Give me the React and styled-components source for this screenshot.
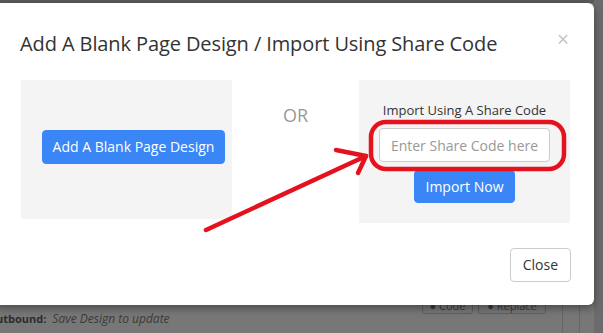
import React from 'react'
import styled, {createGlobalStyle} from 'styled-components'

const Global = createGlobalStyle`
  html, body { margin: 0; padding: 0; }
  body {
    width: 603px;
    height: 333px;
    overflow: hidden;
    font-family: "Open Sans", "Noto Sans", sans-serif;
    background: #767676;
  }
`

const Page = styled.div`
  position: relative;
  width: 603px;
  height: 333px;
  background: #777;
  overflow: hidden;
`

const TopStrip = styled.div`
  height: 3px;
  background: #5a5a5a;
`

const BackRow = styled.div`
  display: flex;
  align-items: center;
  gap: 6px;
  padding: 307px 0 0 0;
  font-size: 11px;
  color: #2c2c2c;
`

const BackLabel = styled.span`
  font-weight: 700;
  margin-left: -4px;
`

const BackHint = styled.span`
  font-style: italic;
  font-size: 12px;
  color: #3a3a3a;
`

const Ghost = styled.span`
  display: inline-flex;
  align-items: flex-end;
  justify-content: center;
  box-sizing: border-box;
  height: 18px;
  width: ${p => p.w}px;
  border: 1px solid #5f5f5f;
  border-radius: 3px;
  font-size: 11px;
  line-height: 11px;
  color: #3a3a3a;
  padding-bottom: 2px;
`

const GhostGroup = styled.div`
  display: flex;
  gap: 5px;
  margin-left: auto;
  margin-right: 57px;
  margin-top: -27px;
`

const Rule = styled.div`
  position: absolute;
  top: 300px;
  left: ${p => p.x}px;
  width: 1px;
  height: 40px;
  background: #666;
`

const RightStrip = styled.div`
  position: absolute;
  top: 0;
  right: 0;
  width: 9px;
  height: 333px;
  background: #6b6b6b;
`

const Modal = styled.div`
  position: absolute;
  top: 3px;
  left: -6px;
  width: 600px;
  height: 302px;
  background: #fff;
  border-radius: 6px;
  box-shadow: 0 3px 9px rgba(0, 0, 0, 0.4);
  display: flex;
  flex-direction: column;
  padding-left: 6px;
  box-sizing: border-box;
`

const Header = styled.div`
  display: flex;
  align-items: flex-start;
  justify-content: space-between;
  padding: 27px 24px 0 20px;
  height: 77px;
  box-sizing: border-box;
`

const Title = styled.h4`
  margin: 0;
  font-size: 20px;
  font-weight: 400;
  color: #333;
  letter-spacing: -0.1px;
  line-height: 28px;
`

const CloseX = styled.span`
  font-size: 21px;
  color: #c4c4c4;
  line-height: 18px;
  margin-top: 0;
  margin-right: 1px;
`

const Body = styled.div`
  display: flex;
  align-items: flex-start;
  padding: 0 0 0 21px;
`

const Panel = styled.div`
  width: ${p => p.w}px;
  height: ${p => p.h}px;
  background: #f4f4f4;
  display: flex;
  flex-direction: column;
  align-items: center;
  justify-content: ${p => (p.center ? 'center' : 'flex-start')};
  box-sizing: border-box;
  padding: ${p => (p.center ? '0 0 6px 14px' : '21px 0 0 0')};
`

const Or = styled.div`
  width: 127px;
  text-align: center;
  font-size: 18px;
  color: #999;
  padding-top: 23px;
  line-height: 24px;
`

const Btn = styled.button`
  font-family: inherit;
  font-size: 14px;
  line-height: 20px;
  border-radius: 4px;
  cursor: pointer;
  height: ${p => p.h || 34}px;
  padding: 0 ${p => p.px || 12}px;
  background: ${p => (p.plain ? '#fff' : '#3a86f6')};
  color: ${p => (p.plain ? '#333' : '#fff')};
  border: 1px solid ${p => (p.plain ? '#ccc' : '#3a86f6')};
`

const Label = styled.div`
  font-size: 13px;
  color: #333;
  line-height: 18px;
  margin-bottom: 9px;
`

const Input = styled.input`
  width: 171px;
  height: 34px;
  box-sizing: border-box;
  border: 1px solid #ccc;
  border-radius: 4px;
  font-family: inherit;
  font-size: 14px;
  text-align: center;
  color: #555;
  margin-bottom: 8px;
  &::placeholder { color: #999; }
`

const Footer = styled.div`
  display: flex;
  justify-content: flex-end;
  padding: 25px 23px 0 0;
`

const Annotation = styled.svg`
  position: absolute;
  top: 0;
  left: 0;
  pointer-events: none;
`

export default function App() {
  return (
    <Page>
      <Global />
      <TopStrip />
      <BackRow>
        <BackLabel>utbound:</BackLabel>
        <BackHint>Save Design to update</BackHint>
        <GhostGroup>
          <Ghost w={51}>● Code</Ghost>
          <Ghost w={68}>● Replace</Ghost>
        </GhostGroup>
      </BackRow>
      <Rule x={562} />
      <Rule x={579} />
      <RightStrip />
      <Modal>
        <Header>
          <Title>Add A Blank Page Design / Import Using Share Code</Title>
          <CloseX>×</CloseX>
        </Header>
        <Body>
          <Panel w={211} h={139} center>
            <Btn px={10}>Add A Blank Page Design</Btn>
          </Panel>
          <Or>OR</Or>
          <Panel w={211} h={143}>
            <Label>Import Using A Share Code</Label>
            <Input placeholder="Enter Share Code here" />
            <Btn h={33} px={10}>Import Now</Btn>
          </Panel>
        </Body>
        <Footer>
          <Btn plain>Close</Btn>
        </Footer>
      </Modal>
      <Annotation width="603" height="333">
        <rect x="371" y="122" width="193" height="47" rx="15" ry="15"
          fill="none" stroke="#e3121e" strokeWidth="4.5" />
        <g stroke="#e3121e" strokeWidth="4.5" strokeLinecap="round" fill="none">
          <line x1="206" y1="230" x2="366" y2="156" />
          <polyline points="336,150 366,156 358,173" strokeLinejoin="round" />
        </g>
      </Annotation>
    </Page>
  )
}
